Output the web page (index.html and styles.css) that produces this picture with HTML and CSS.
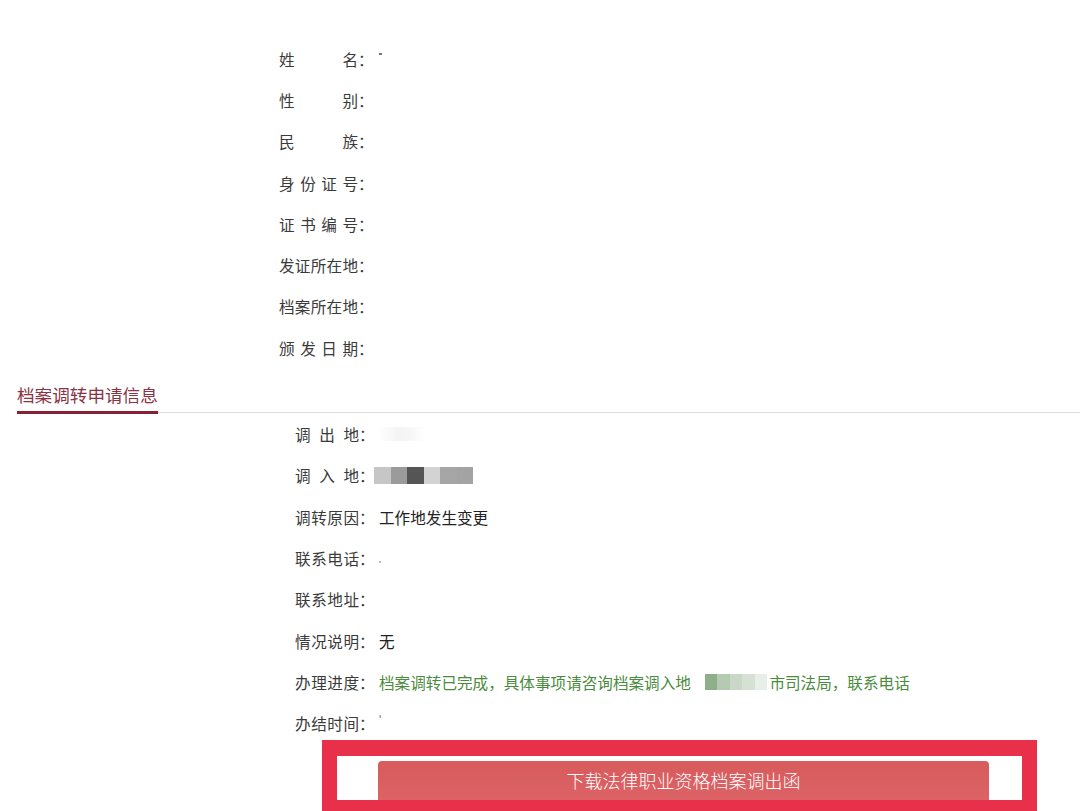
FILE: index.html
```html
<!DOCTYPE html>
<html>
	<head>
		<meta charset="utf-8">
		<title>档案调转申请信息</title>
		<link rel="stylesheet" href="styles.css">
	</head>
	<body>
		<div id="certInfo" class="infoList">
			<div class="row"><span class="label">姓名</span><span class="colon">：</span><span class="value"><span class="speck speckName"></span></span></div>
			<div class="row"><span class="label">性别</span><span class="colon">：</span><span class="value"></span></div>
			<div class="row"><span class="label">民族</span><span class="colon">：</span><span class="value"></span></div>
			<div class="row"><span class="label">身份证号</span><span class="colon">：</span><span class="value"></span></div>
			<div class="row"><span class="label">证书编号</span><span class="colon">：</span><span class="value"></span></div>
			<div class="row"><span class="label">发证所在地</span><span class="colon">：</span><span class="value"></span></div>
			<div class="row"><span class="label">档案所在地</span><span class="colon">：</span><span class="value"></span></div>
			<div class="row"><span class="label">颁发日期</span><span class="colon">：</span><span class="value"></span></div>
		</div>

		<div class="sectionHead">
			<span class="sectionTitle">档案调转申请信息</span>
		</div>

		<div id="transferInfo" class="infoList">
			<div class="row"><span class="label">调出地</span><span class="colon">：</span><span class="value"><span class="smudge"></span></span></div>
			<div class="row"><span class="label">调入地</span><span class="colon">：</span><span class="value">
				<span class="mosaic">
					<span class="px px1"></span><span class="px px2"></span><span class="px px3"></span><span class="px px4"></span><span class="px px5"></span><span class="px px6"></span>
				</span>
			</span></div>
			<div class="row"><span class="label">调转原因</span><span class="colon">：</span><span class="value">工作地发生变更</span></div>
			<div class="row"><span class="label">联系电话</span><span class="colon">：</span><span class="value"><span class="speck speckDot"></span></span></div>
			<div class="row"><span class="label">联系地址</span><span class="colon">：</span><span class="value"></span></div>
			<div class="row"><span class="label">情况说明</span><span class="colon">：</span><span class="value">无</span></div>
			<div class="row"><span class="label">办理进度</span><span class="colon">：</span><span class="value progress">档案调转已完成，具体事项请咨询档案调入地<span class="mosaic greenMosaic"><span class="gpx g1"></span><span class="gpx g2"></span><span class="gpx g3"></span><span class="gpx g4"></span><span class="gpx g5"></span></span>市司法局，联系电话</span></div>
			<div class="row"><span class="label">办结时间</span><span class="colon">：</span><span class="value"><span class="tick">ʹ</span></span></div>
		</div>

		<div class="downloadFrame">
			<div class="downloadInner">
				<button class="downloadBtn">下载法律职业资格档案调出函</button>
			</div>
		</div>
	</body>
</html>
```

FILE: styles.css
```css
html{
	overflow:hidden;
}
body{
	margin:0px;
	background-color:#ffffff;
	font-family:"Noto Sans CJK SC","Microsoft YaHei",sans-serif;
	font-size:15.6px;
	color:#333333;
}
.infoList{
	padding:0px 0px 0px 279px;
}
#certInfo{
	padding-top:38px;
}
#transferInfo{
	padding-left:295px;
}
.row{
	display:flex;
	align-items:center;
	height:41.3px;
	line-height:20px;
}
.label{
	display:inline-block;
	width:79px;
	text-align:justify;
	text-align-last:justify;
	color:#3a3a3a;
}
#transferInfo .label{
	width:64px;
}
.colon{
	width:16px;
	color:#3a3a3a;
}
.value{
	display:flex;
	align-items:center;
	margin-left:5px;
	color:#222222;
	white-space:nowrap;
}
#transferInfo .value{
	margin-left:4px;
}
.progress{
	color:#4b8b3d;
}
.speck{
	display:inline-block;
	background-color:#777777;
}
.speckName{
	width:3px;
	height:2px;
	margin-top:-10px;
}
.speckDot{
	width:2px;
	height:2px;
	background-color:#bbbbbb;
	margin-top:8px;
}
.tick{
	color:#666666;
	font-size:12px;
	margin-top:-8px;
}
.smudge{
	display:inline-block;
	width:46px;
	height:14px;
	background:linear-gradient(to right,#ffffff,#f4f4f4 40%,#f7f7f7 70%,#ffffff);
}
.mosaic{
	display:inline-flex;
	margin-left:-5px;
}
.px{
	display:inline-block;
	width:16.5px;
	height:17px;
}
.px1{ background-color:#c6c6c6; }
.px2{ background-color:#9b9b9b; }
.px3{ background-color:#555555; }
.px4{ background-color:#d3d3d3; }
.px5{ background-color:#a6a6a6; }
.px6{ background-color:#a3a3a3; }
.greenMosaic{
	margin:0px 2px 0px 14px;
}
.gpx{
	display:inline-block;
	width:12.5px;
	height:16px;
}
.g1{ background-color:#8fae8a; }
.g2{ background-color:#b4cbb1; }
.g3{ background-color:#c9d8c7; }
.g4{ background-color:#d6e0d5; }
.g5{ background-color:#e8eee8; }
.sectionHead{
	margin:0px 0px 0px 17px;
	height:44px;
	border-bottom:solid 1px #dddddd;
	display:flex;
	align-items:flex-end;
}
.sectionTitle{
	display:inline-block;
	font-size:17.6px;
	line-height:24px;
	color:#8a3344;
	padding-bottom:4px;
	border-bottom:solid 3px #8b1f33;
	margin-bottom:-2px;
}
.downloadFrame{
	position:relative;
	margin:-4px 0px 0px 322px;
	width:685px;
	border-style:solid;
	border-color:#e8304a;
	border-width:16px 15px 15px 15px;
	background-color:#ffffff;
}
.downloadInner{
	height:44px;
	padding:5px 33px 0px 41px;
	box-sizing:border-box;
	overflow:hidden;
}
.downloadBtn{
	display:block;
	width:611px;
	height:42px;
	padding:0px 0px 4px 0px;
	border:none;
	border-radius:4px 4px 0px 0px;
	background:linear-gradient(to bottom,#d85b5d,#dc6366);
	color:#ffffff;
	font-family:"Noto Sans CJK SC","Microsoft YaHei",sans-serif;
	font-size:18px;
	font-weight:300;
	line-height:36px;
	text-align:center;
}
```
